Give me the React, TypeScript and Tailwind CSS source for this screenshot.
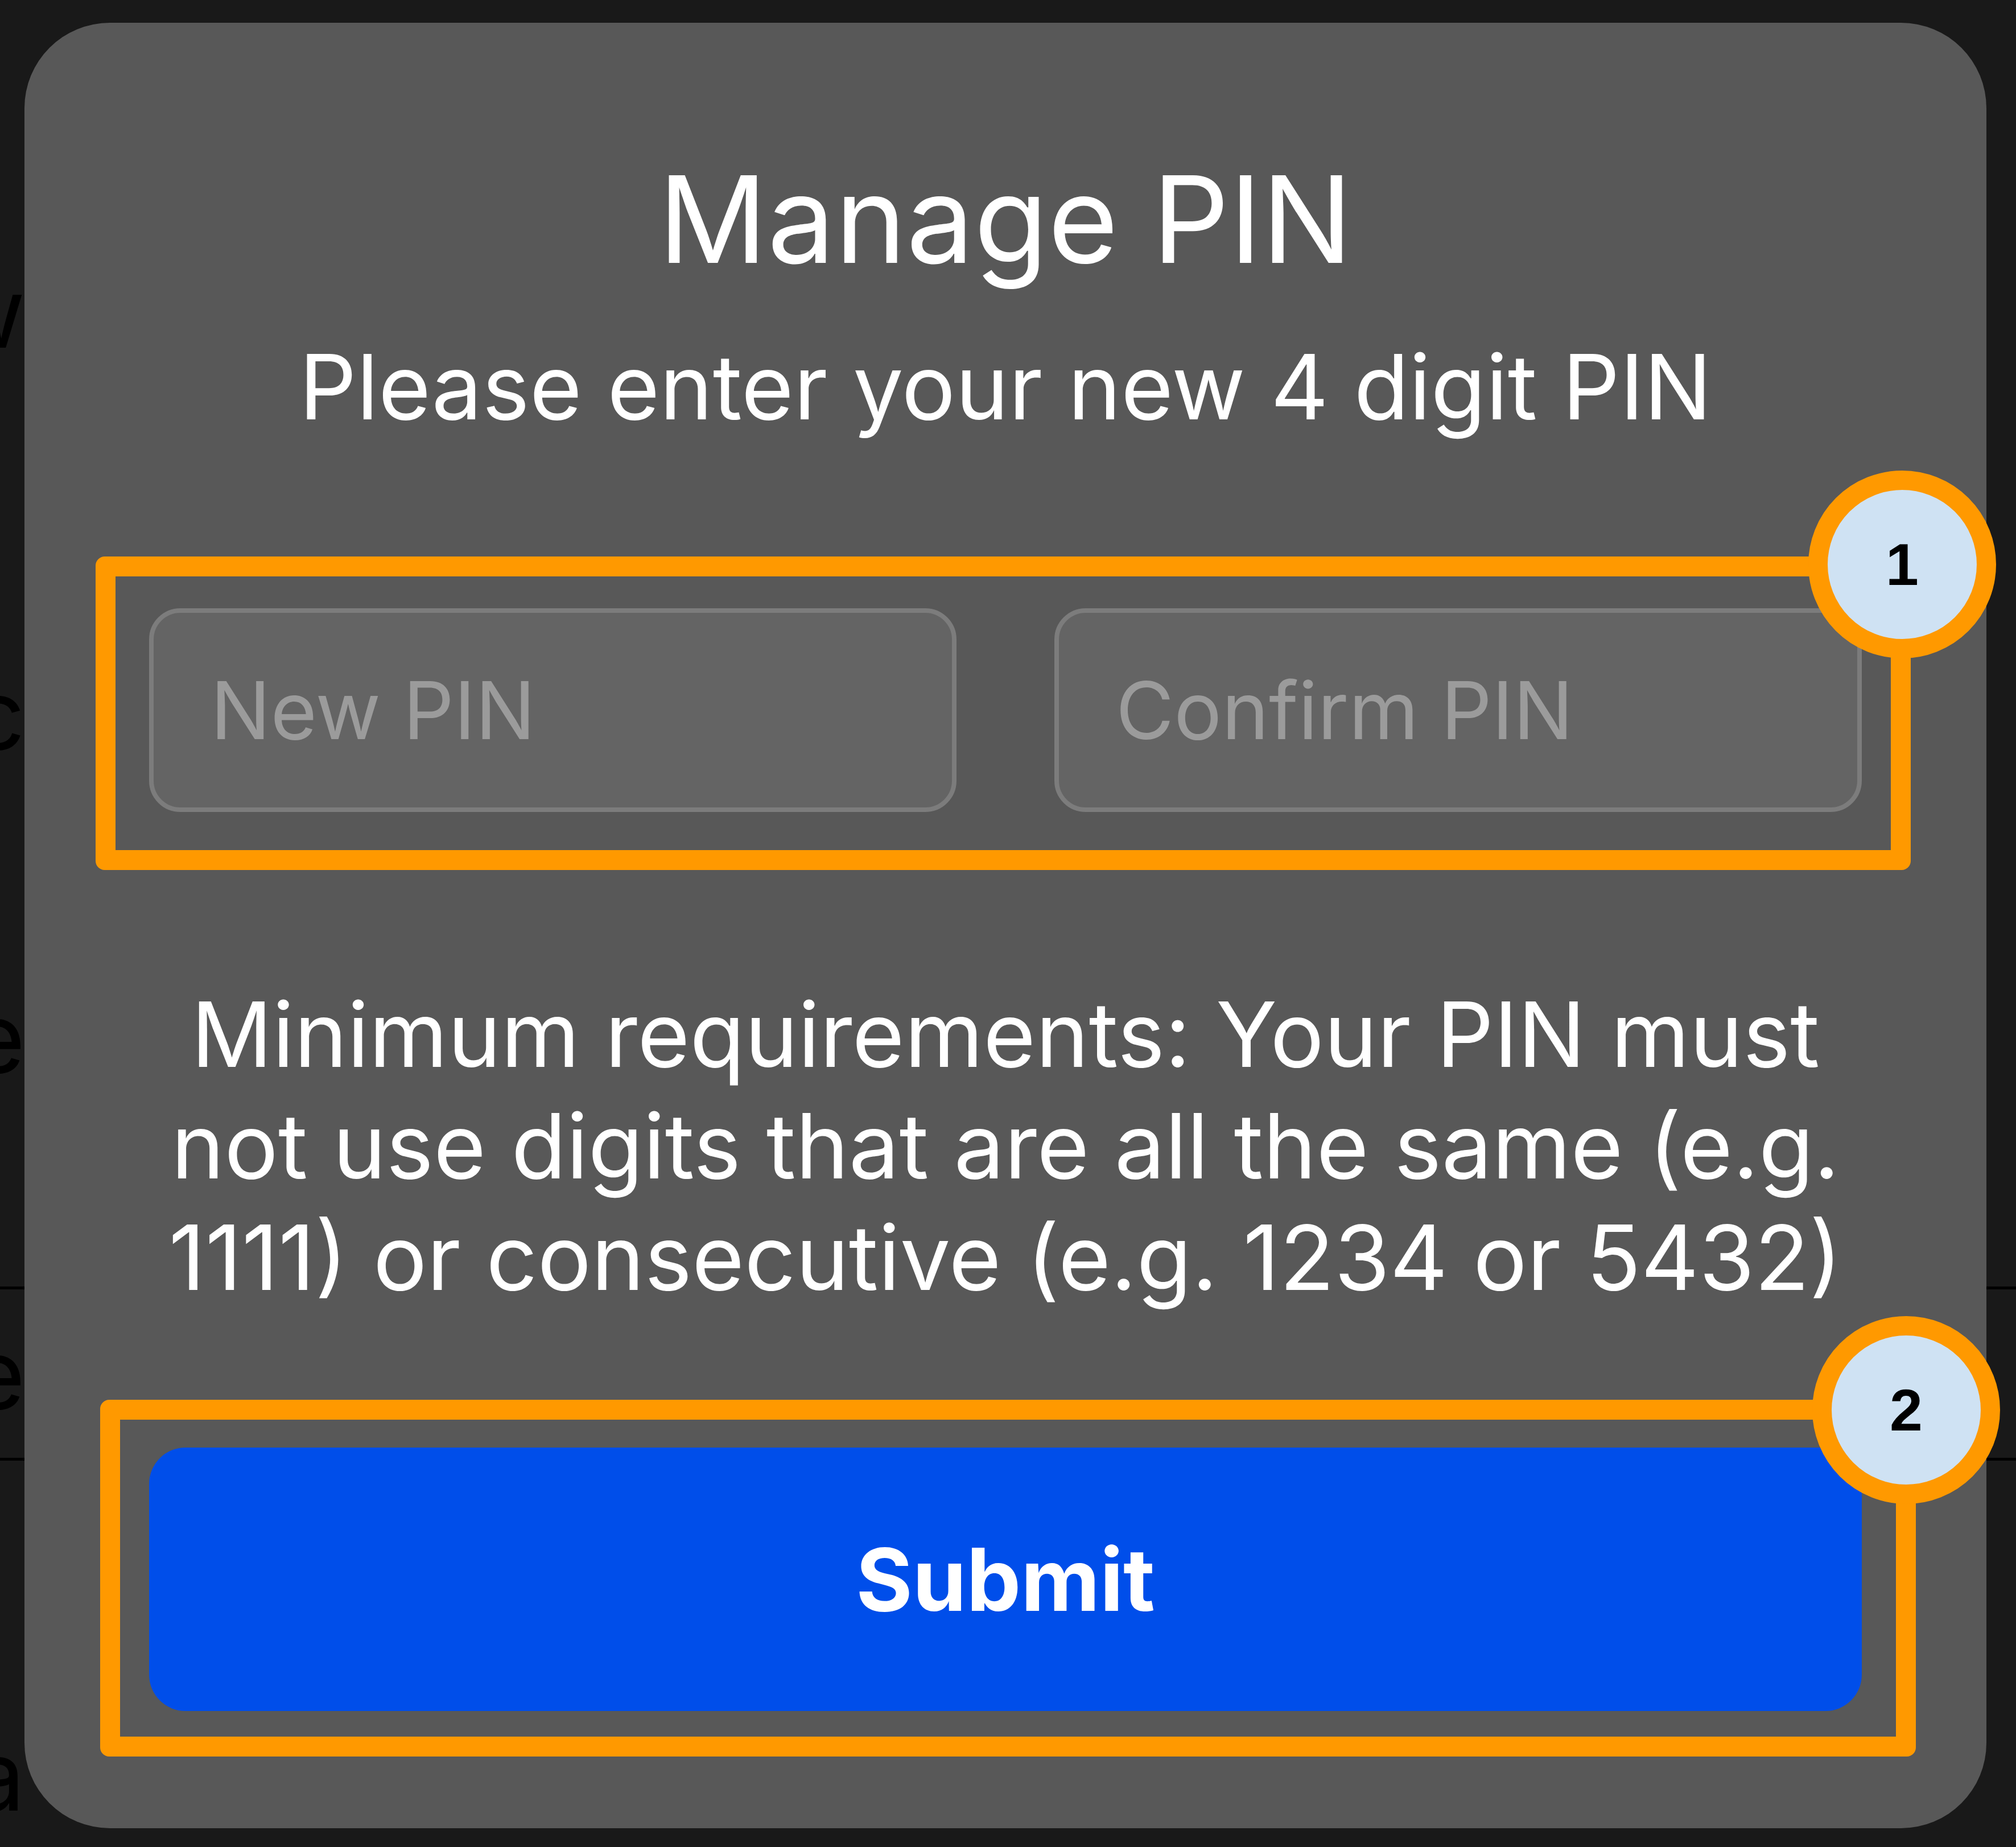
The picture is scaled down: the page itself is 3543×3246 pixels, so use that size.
import { useState } from "react";

// Rows of the settings list that sits behind the dialog; only their tails show
const backdropRows = [
  { label: "Show", mt: "mt-[399px]", h: "h-[300px]" },
  { label: "Sync", mt: "mt-[406px]", h: "h-[300px]" },
  { label: "Name", mt: "mt-[268px]", h: "h-[300px]" },
  { label: "", mt: "mt-0", h: "h-[293px]", rule: true },
  { label: "Time", mt: "mt-0", h: "h-[301px]", rule: true },
  { label: "Data", mt: "mt-[403px]", h: "h-[300px]" },
];

function Callout({ n, className }: { n: number; className: string }) {
  return (
    <div
      className={`absolute w-[330px] h-[330px] rounded-full border-[34px] border-[#ff9900] bg-[#cfe2f3] flex items-center justify-center font-['Liberation_Sans',Arial,sans-serif] font-bold text-[104px] leading-none text-black ${className}`}
    >
      {n}
    </div>
  );
}

export default function App() {
  const [pin, setPin] = useState("");
  const [confirm, setConfirm] = useState("");

  return (
    <div className="relative w-[3543px] h-[3246px] overflow-hidden bg-[#191919] font-['Inter','Noto_Sans',sans-serif]">
      {/* page underneath the modal */}
      <div className="flex flex-col">
        {backdropRows.map((row, i) => (
          <div
            key={i}
            className={`${row.mt} ${row.h} w-full flex items-center ${row.rule ? "border-b-[5px] border-black" : ""}`}
          >
            {row.label && (
              <div className="w-[44px] overflow-hidden flex justify-end whitespace-nowrap text-[170px] text-black">
                {row.label}
              </div>
            )}
          </div>
        ))}
      </div>

      {/* Manage PIN dialog */}
      <div className="absolute left-[43px] top-[40px] w-[3448px] h-[3173px] rounded-[150px] bg-[#585858] px-[219px] pt-[239px] flex flex-col items-center text-white">
        <h1 className="text-[212px] leading-[212px] font-normal">Manage PIN</h1>
        <p className="mt-[110px] text-[158px] leading-[158px]">
          Please enter your new 4 digit PIN
        </p>

        <div className="mt-[310px] w-full grid grid-cols-2 gap-[172px]">
          <input
            value={pin}
            onChange={(e) => setPin(e.target.value)}
            placeholder="New PIN"
            inputMode="numeric"
            className="h-[358px] rounded-[55px] border-[8px] border-[#7c7c7c] bg-[#646464] px-[100px] text-[140px] text-white placeholder:text-[#9b9b9b] outline-none"
          />
          <input
            value={confirm}
            onChange={(e) => setConfirm(e.target.value)}
            placeholder="Confirm PIN"
            inputMode="numeric"
            className="h-[358px] rounded-[55px] border-[8px] border-[#7c7c7c] bg-[#646464] px-[100px] text-[140px] text-white placeholder:text-[#9b9b9b] outline-none"
          />
        </div>

        <p className="mt-[293px] text-center text-[158px] leading-[196px]">
          Minimum requirements: Your PIN must
          <br />
          not use digits that are all the same (e.g.
          <br />
          1111) or consecutive (e.g. 1234 or 5432)
        </p>

        <button
          type="button"
          className="mt-[236px] w-full h-[463px] rounded-[64px] bg-[#004eea] text-[152px] font-bold text-white"
        >
          Submit
        </button>

        {/* annotation frames */}
        <div className="absolute left-[125px] top-[938px] w-[3190px] h-[551px] rounded-[16px] border-[35px] border-[#ff9900] pointer-events-none" />
        <Callout n={1} className="left-[3135px] top-[787px]" />
        <div className="absolute left-[133px] top-[2420px] w-[3191px] h-[627px] rounded-[16px] border-[35px] border-[#ff9900] pointer-events-none" />
        <Callout n={2} className="left-[3142px] top-[2273px]" />
      </div>
    </div>
  );
}
